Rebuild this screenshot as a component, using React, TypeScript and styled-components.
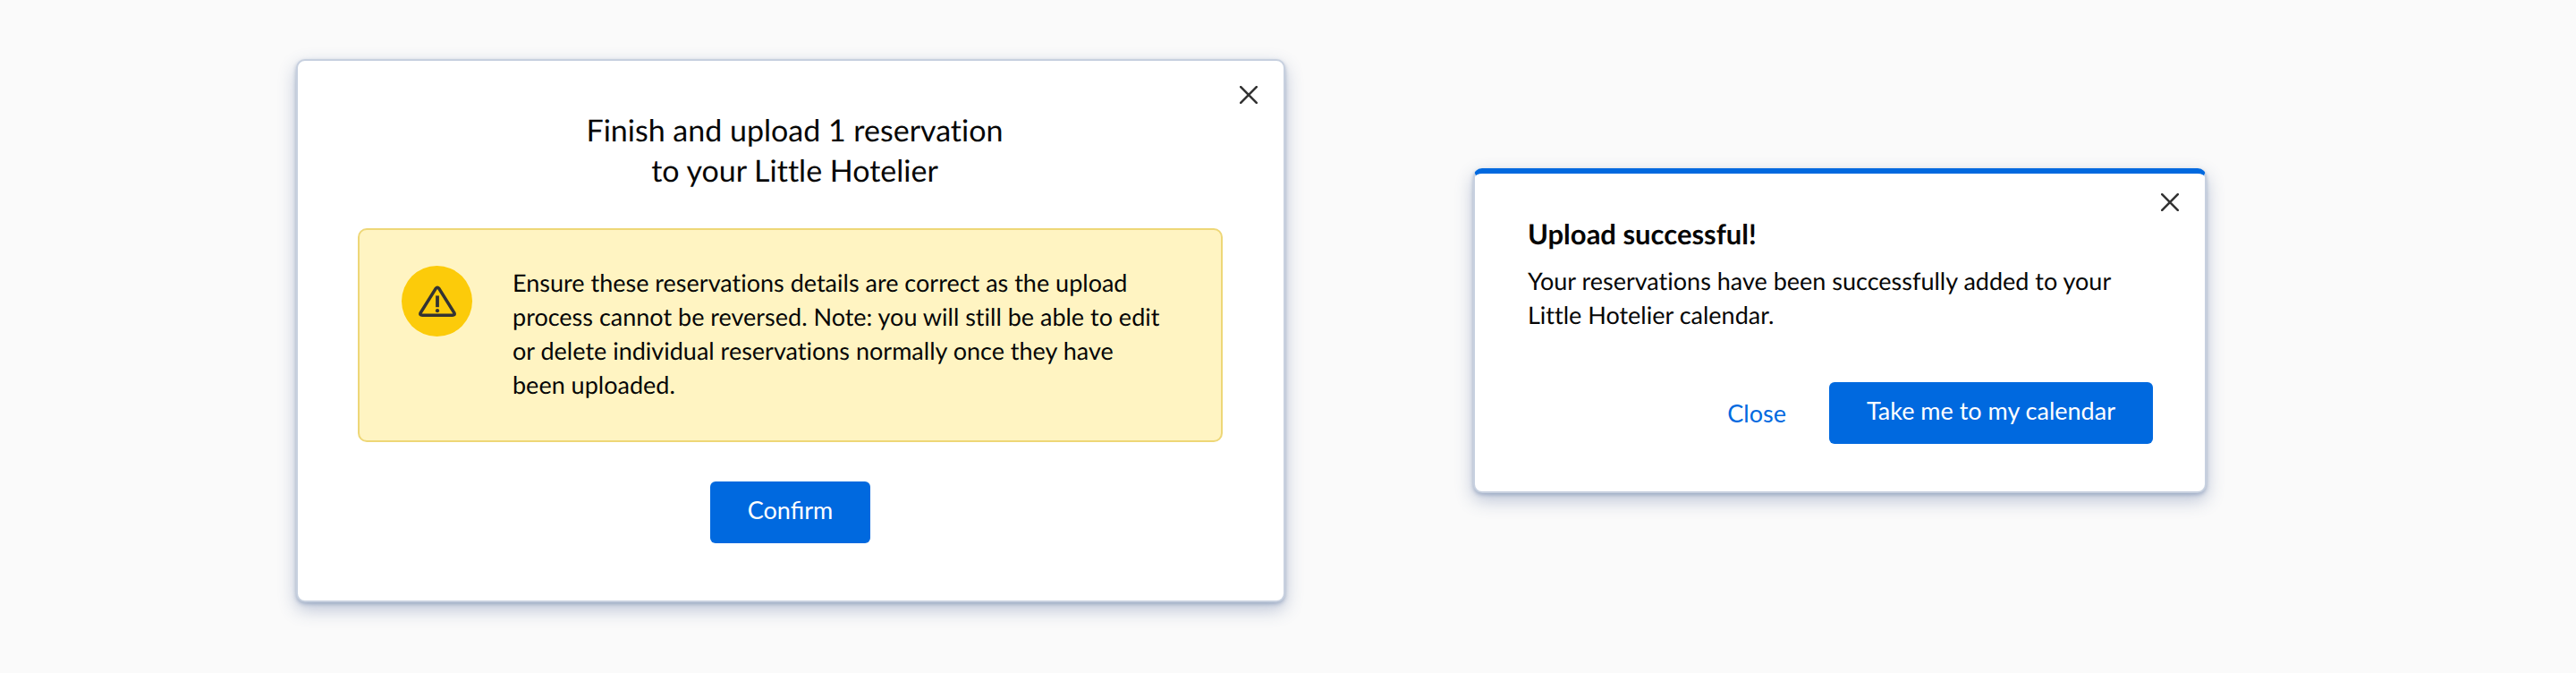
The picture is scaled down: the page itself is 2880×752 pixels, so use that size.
import React from "react";
import styled, { createGlobalStyle, css } from "styled-components";

const GlobalStyle = createGlobalStyle`
  *, *::before, *::after { box-sizing: border-box; }
  body {
    margin: 0;
    background: #fafafa;
    color: #060606;
    font-family: Lato, "Liberation Sans", sans-serif;
    font-variant-ligatures: none;
    text-rendering: geometricPrecision;
  }
`;

const Page = styled.main`
  display: grid;
  grid-template-columns:
    minmax(0, 331fr) minmax(0, 1106fr) minmax(0, 210fr)
    minmax(0, 820fr) minmax(0, 413fr);
  align-items: center;
  min-height: 100vh;
  padding: 66px 0 79px;
`;

const Dialog = styled.section<{ $column: number; $accent?: boolean }>`
  position: relative;
  grid-column: ${(p) => p.$column};
  display: flex;
  flex-direction: column;
  border: 2px solid #c7d0df;
  border-radius: 10px;
  background: #fff;
  box-shadow: 0 2px 4px rgba(100, 125, 165, 0.45), 0 8px 20px rgba(60, 85, 140, 0.32);
  padding: ${(p) => (p.$accent ? "45px 58px 53px 59px" : "55px 68px 64px 67px")};
  ${(p) =>
    p.$accent &&
    css`
      border-top: 6px solid #0069df;
    `}
`;

const CloseButton = styled.button<{ $top: number }>`
  position: absolute;
  top: ${(p) => p.$top}px;
  right: 21px;
  display: flex;
  padding: 8px;
  border: 0;
  background: none;
  color: #333;
  cursor: pointer;
`;

const ConfirmTitle = styled.h2`
  margin: 0 0 42px;
  padding-left: 10px;
  font-size: 34px;
  font-weight: 400;
  line-height: 45px;
  text-align: center;
`;

const SuccessTitle = styled.h2`
  margin: 0 0 11px;
  font-size: 31px;
  font-weight: 700;
  line-height: 45px;
`;

const Text = styled.p`
  margin: 0;
  font-size: 27px;
  line-height: 38px;
`;

const Alert = styled.div`
  display: flex;
  align-items: flex-start;
  gap: 45px;
  padding: 40px 61px 43px 47px;
  border: 2px solid #eed777;
  border-radius: 10px;
  background: #fff4c2;
`;

const AlertIcon = styled.span`
  display: flex;
  flex: none;
  align-items: center;
  justify-content: center;
  width: 79px;
  height: 79px;
  border-radius: 50%;
  background: #fccb0a;
`;

const Actions = styled.div<{ $align: string; $space: number }>`
  display: flex;
  align-items: center;
  justify-content: ${(p) => p.$align};
  gap: 48px;
  margin-top: ${(p) => p.$space}px;
`;

const BaseButton = styled.button`
  border: 0;
  font: inherit;
  font-variant-ligatures: normal;
  font-size: 27px;
  line-height: 38px;
  cursor: pointer;
`;

const PrimaryButton = styled(BaseButton)`
  padding: 13px 42px 18px;
  border-radius: 6px;
  background: #0069df;
  color: #fff;
`;

const TextButton = styled(BaseButton)`
  padding: 0;
  background: none;
  color: #0069df;
`;

const CrossIcon = () => (
  <svg width="20" height="20" viewBox="0 0 20 20" fill="none" stroke="currentColor" strokeWidth="2.6" strokeLinecap="round" aria-hidden="true">
    <path d="M1.2 1.2 18.8 18.8M18.8 1.2 1.2 18.8" />
  </svg>
);

const WarningIcon = () => (
  <svg width="42" height="36" viewBox="0 0 42 36" fill="none" stroke="#333" strokeLinecap="round" strokeLinejoin="round" aria-hidden="true">
    <path strokeWidth="3.6" d="M19.2 3.4 2.3 30.4Q.9 33.2 4.2 33.2H37.8Q41.1 33.2 39.7 30.4L22.8 3.4Q21 1.2 19.2 3.4Z" />
    <path strokeWidth="3.8" strokeLinecap="butt" d="M21 11.4V24.2" />
    <circle cx="21" cy="28.2" r="2.1" fill="#333" stroke="none" />
  </svg>
);

export default function App() {
  return (
    <>
      <GlobalStyle />
      <Page>
        <Dialog $column={2} role="dialog" aria-labelledby="confirm-title">
          <CloseButton $top={20} type="button" aria-label="Dismiss">
            <CrossIcon />
          </CloseButton>
          <ConfirmTitle id="confirm-title">
            Finish and upload 1 reservation
            <br />
            to your Little Hotelier
          </ConfirmTitle>
          <Alert role="alert">
            <AlertIcon>
              <WarningIcon />
            </AlertIcon>
            <Text>
              Ensure these reservations details are correct as the upload process cannot be reversed. Note: you will
              still be able to edit or delete individual reservations normally once they have been uploaded.
            </Text>
          </Alert>
          <Actions $align="center" $space={44}>
            <PrimaryButton type="button">Confirm</PrimaryButton>
          </Actions>
        </Dialog>

        <Dialog $column={4} $accent role="dialog" aria-labelledby="success-title">
          <CloseButton $top={14} type="button" aria-label="Dismiss">
            <CrossIcon />
          </CloseButton>
          <SuccessTitle id="success-title">Upload successful!</SuccessTitle>
          <Text>Your reservations have been successfully added to your Little Hotelier calendar.</Text>
          <Actions $align="flex-end" $space={56}>
            <TextButton type="button">Close</TextButton>
            <PrimaryButton type="button">Take me to my calendar</PrimaryButton>
          </Actions>
        </Dialog>
      </Page>
    </>
  );
}
